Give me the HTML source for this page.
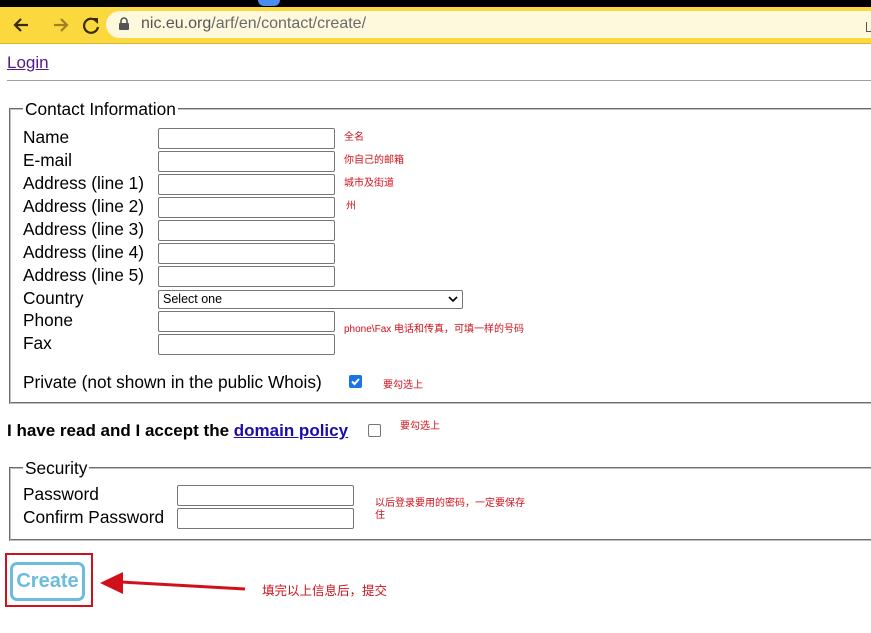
<!DOCTYPE html>
<html><head><meta charset="utf-8"><style>
body{margin:0;width:871px;height:633px;overflow:hidden;background:#fff;position:relative;font-family:"Liberation Sans","Noto Sans CJK SC",sans-serif;color:#000}
.a{position:absolute;white-space:nowrap}
.l{font-size:17.3px;line-height:20px}
.in{position:absolute;box-sizing:border-box;border:1px solid #767676;border-radius:2px;background:#fff}
.cn{position:absolute;font-size:10px;color:#d0101a;white-space:nowrap;line-height:12px}
fieldset{position:absolute;margin:0;border:2px groove #c0c0c0;border-right:none}
</style></head><body>
<div class="a" style="left:0;top:0;width:871px;height:7px;background:#000"></div>
<div class="a" style="left:258px;top:0;width:22px;height:6px;background:#4a8cf0;border-radius:0 0 11px 11px"></div>
<div class="a" style="left:0;top:7px;width:871px;height:36px;background:#fbd83e;border-bottom:1px solid #d8b530"></div>
<div class="a" style="left:106px;top:11px;width:780px;height:27px;background:#fef9dc;border-radius:14px"></div>
<svg class="a" style="left:10px;top:14px" width="90" height="22" viewBox="0 0 90 22">
<path d="M18 11H5M11 5L5 11l6 6" stroke="#3a2a00" stroke-width="2.2" fill="none"/>
<path d="M44 11H57M51 5l6 6-6 6" stroke="#a08020" stroke-width="2.2" fill="none"/>
<path d="M87 8A7 7 0 1 0 88 13" stroke="#3a2a00" stroke-width="2.2" fill="none"/><path d="M82 4h6v6z" fill="#3a2a00"/>
</svg>
<svg class="a" style="left:118px;top:17px" width="12" height="14"><rect x="1" y="6" width="10" height="7" rx="1" fill="#555"/><path d="M3 6V4a3 3 0 0 1 6 0v2" stroke="#555" stroke-width="1.6" fill="none"/></svg>
<div class="a" style="left:141px;top:15px;font-size:16px;color:#555">nic.eu.org<span style="color:#6a6a6a">/arf/en/contact/create/</span></div>
<div class="a" style="left:866px;top:22px;width:6px;height:9px;border-left:1px solid #555;border-bottom:1px solid #555"></div>

<div class="a l" style="left:7px;top:53px;color:#551a8b;text-decoration:underline;font-size:17px">Login</div>
<div class="a" style="left:7px;top:80px;width:864px;height:1px;background:#a0a0a0"></div>

<fieldset style="left:9px;top:100px;width:870px;height:300px;padding:0">
<legend style="font-size:17.3px;padding:0 2px;margin-left:12px;line-height:18px">Contact Information</legend></fieldset>
<div class="a l" style="left:23px;top:127px">Name</div>
<div class="a l" style="left:23px;top:150px">E-mail</div>
<div class="a l" style="left:23px;top:173px">Address (line 1)</div>
<div class="a l" style="left:23px;top:196px">Address (line 2)</div>
<div class="a l" style="left:23px;top:219px">Address (line 3)</div>
<div class="a l" style="left:23px;top:242px">Address (line 4)</div>
<div class="a l" style="left:23px;top:265px">Address (line 5)</div>
<div class="a l" style="left:23px;top:288px">Country</div>
<div class="a l" style="left:23px;top:310px">Phone</div>
<div class="a l" style="left:23px;top:333px">Fax</div>
<div class="in" style="left:158px;top:128px;width:177px;height:21px"></div>
<div class="in" style="left:158px;top:151px;width:177px;height:21px"></div>
<div class="in" style="left:158px;top:174px;width:177px;height:21px"></div>
<div class="in" style="left:158px;top:197px;width:177px;height:21px"></div>
<div class="in" style="left:158px;top:220px;width:177px;height:21px"></div>
<div class="in" style="left:158px;top:243px;width:177px;height:21px"></div>
<div class="in" style="left:158px;top:266px;width:177px;height:21px"></div>
<div class="in" style="left:158px;top:290px;width:305px;height:19px;font-size:12.5px;padding:1px 4px;line-height:15px">Select one
<svg style="position:absolute;right:4px;top:5px" width="10" height="7"><path d="M1 1l4 4 4-4" stroke="#000" stroke-width="1.6" fill="none"/></svg></div>
<div class="in" style="left:158px;top:311px;width:177px;height:21px"></div>
<div class="in" style="left:158px;top:334px;width:177px;height:21px"></div>
<div class="cn" style="left:344px;top:132px">全名</div>
<div class="cn" style="left:344px;top:155px">你自己的邮箱</div>
<div class="cn" style="left:344px;top:178px">城市及街道</div>
<div class="cn" style="left:346px;top:201px">州</div>
<div class="cn" style="left:344px;top:324px">phone\Fax  电话和传真，可填一样的号码</div>
<div class="a l" style="left:23px;top:372px">Private (not shown in the public Whois)</div>
<div class="a" style="left:349px;top:375px;width:13px;height:13px;background:#1a73e8;border-radius:2px"><svg width="13" height="13" style="display:block"><path d="M3 6.5l2.5 2.5 4.5-5" stroke="#fff" stroke-width="2" fill="none"/></svg></div>
<div class="cn" style="left:383px;top:380px">要勾选上</div>

<div class="a" style="left:7px;top:421px;font-size:17px;font-weight:bold;line-height:20px">I have read and I accept the <span style="color:#1a0dab;text-decoration:underline">domain policy</span></div>
<div class="a" style="left:368px;top:424px;width:11px;height:11px;border:1px solid #767676;border-radius:2px"></div>
<div class="cn" style="left:400px;top:421px">要勾选上</div>

<fieldset style="left:9px;top:459px;width:870px;height:78px;padding:0">
<legend style="font-size:17.3px;padding:0 2px;margin-left:12px;line-height:18px">Security</legend></fieldset>
<div class="a l" style="left:23px;top:484px">Password</div>
<div class="a l" style="left:23px;top:507px">Confirm Password</div>
<div class="in" style="left:177px;top:485px;width:177px;height:21px"></div>
<div class="in" style="left:177px;top:508px;width:177px;height:21px"></div>
<div class="cn" style="left:375px;top:498px">以后登录要用的密码，一定要保存<br>住</div>

<div class="a" style="left:5px;top:553px;width:84px;height:50px;border:2px solid #d0101a"></div>
<div class="a" style="left:10px;top:562px;width:69px;height:33px;border:3px solid #6bbcde;border-radius:7px;color:#6bbcde;font-weight:bold;font-size:20px;line-height:33px;text-align:center">Create</div>
<svg class="a" style="left:95px;top:568px" width="160" height="30"><path d="M5 15L28 4V26Z" fill="#d0101a"/><path d="M26 14L150 21" stroke="#d0101a" stroke-width="3"/></svg>
<div class="a" style="left:262px;top:580px;font-size:12.5px;color:#d0101a">填完以上信息后，提交</div>
</body></html>
